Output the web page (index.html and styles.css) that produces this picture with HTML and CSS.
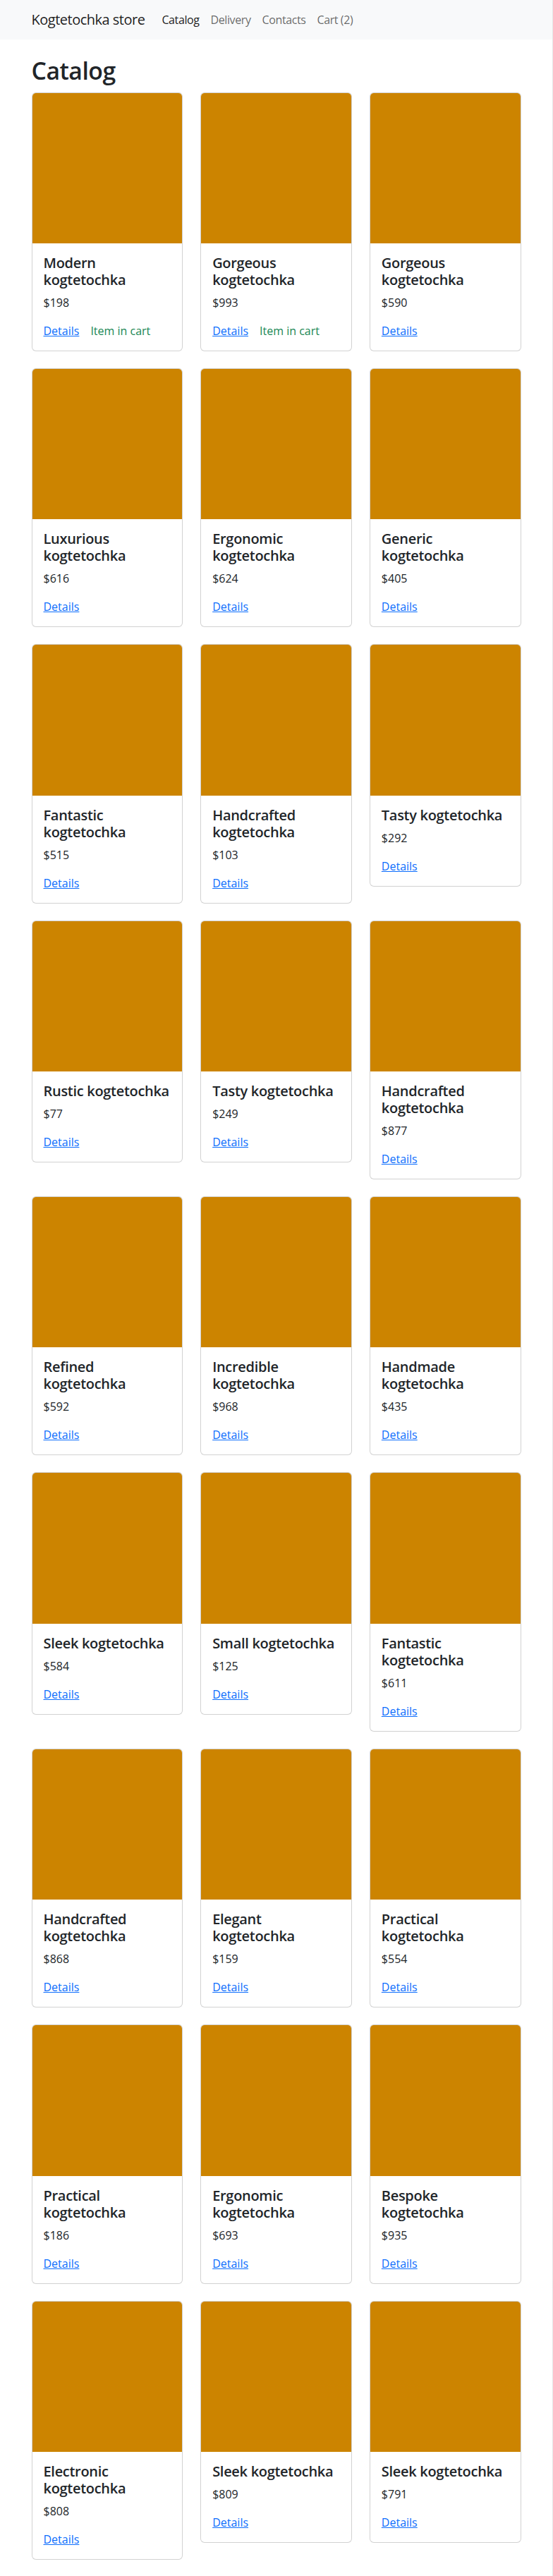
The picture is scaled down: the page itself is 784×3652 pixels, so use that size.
FILE: index.html
```html
<!DOCTYPE html>
<html lang="en">
<head>
<meta charset="utf-8">
<title>Kogtetochka store</title>
<link rel="stylesheet" href="styles.css">
</head>
<body>
<nav class="navbar">
  <div class="container nav-inner">
    <a class="brand" href="#">Kogtetochka store</a>
    <ul class="nav">
      <li><a class="nav-link active" href="#">Catalog</a></li>
      <li><a class="nav-link" href="#">Delivery</a></li>
      <li><a class="nav-link" href="#">Contacts</a></li>
      <li><a class="nav-link" href="#">Cart (2)</a></li>
    </ul>
  </div>
</nav>
<main class="container page">
  <h1 class="title">Catalog</h1>
  <div class="grid">
    <div class="card"><div class="card-img"></div><div class="card-body"><h5 class="card-title">Modern kogtetochka</h5><p class="price">$198</p><div class="links"><a class="card-link" href="#">Details</a><span class="in-cart">Item in cart</span></div></div></div>
    <div class="card"><div class="card-img"></div><div class="card-body"><h5 class="card-title">Gorgeous kogtetochka</h5><p class="price">$993</p><div class="links"><a class="card-link" href="#">Details</a><span class="in-cart">Item in cart</span></div></div></div>
    <div class="card"><div class="card-img"></div><div class="card-body"><h5 class="card-title">Gorgeous kogtetochka</h5><p class="price">$590</p><div class="links"><a class="card-link" href="#">Details</a></div></div></div>

    <div class="card"><div class="card-img"></div><div class="card-body"><h5 class="card-title">Luxurious kogtetochka</h5><p class="price">$616</p><div class="links"><a class="card-link" href="#">Details</a></div></div></div>
    <div class="card"><div class="card-img"></div><div class="card-body"><h5 class="card-title">Ergonomic kogtetochka</h5><p class="price">$624</p><div class="links"><a class="card-link" href="#">Details</a></div></div></div>
    <div class="card"><div class="card-img"></div><div class="card-body"><h5 class="card-title">Generic kogtetochka</h5><p class="price">$405</p><div class="links"><a class="card-link" href="#">Details</a></div></div></div>

    <div class="card"><div class="card-img"></div><div class="card-body"><h5 class="card-title">Fantastic kogtetochka</h5><p class="price">$515</p><div class="links"><a class="card-link" href="#">Details</a></div></div></div>
    <div class="card"><div class="card-img"></div><div class="card-body"><h5 class="card-title">Handcrafted kogtetochka</h5><p class="price">$103</p><div class="links"><a class="card-link" href="#">Details</a></div></div></div>
    <div class="card"><div class="card-img"></div><div class="card-body"><h5 class="card-title">Tasty kogtetochka</h5><p class="price">$292</p><div class="links"><a class="card-link" href="#">Details</a></div></div></div>

    <div class="card"><div class="card-img"></div><div class="card-body"><h5 class="card-title">Rustic kogtetochka</h5><p class="price">$77</p><div class="links"><a class="card-link" href="#">Details</a></div></div></div>
    <div class="card"><div class="card-img"></div><div class="card-body"><h5 class="card-title">Tasty kogtetochka</h5><p class="price">$249</p><div class="links"><a class="card-link" href="#">Details</a></div></div></div>
    <div class="card"><div class="card-img"></div><div class="card-body"><h5 class="card-title">Handcrafted kogtetochka</h5><p class="price">$877</p><div class="links"><a class="card-link" href="#">Details</a></div></div></div>

    <div class="card"><div class="card-img"></div><div class="card-body"><h5 class="card-title">Refined kogtetochka</h5><p class="price">$592</p><div class="links"><a class="card-link" href="#">Details</a></div></div></div>
    <div class="card"><div class="card-img"></div><div class="card-body"><h5 class="card-title">Incredible kogtetochka</h5><p class="price">$968</p><div class="links"><a class="card-link" href="#">Details</a></div></div></div>
    <div class="card"><div class="card-img"></div><div class="card-body"><h5 class="card-title">Handmade kogtetochka</h5><p class="price">$435</p><div class="links"><a class="card-link" href="#">Details</a></div></div></div>

    <div class="card"><div class="card-img"></div><div class="card-body"><h5 class="card-title">Sleek kogtetochka</h5><p class="price">$584</p><div class="links"><a class="card-link" href="#">Details</a></div></div></div>
    <div class="card"><div class="card-img"></div><div class="card-body"><h5 class="card-title">Small kogtetochka</h5><p class="price">$125</p><div class="links"><a class="card-link" href="#">Details</a></div></div></div>
    <div class="card"><div class="card-img"></div><div class="card-body"><h5 class="card-title">Fantastic kogtetochka</h5><p class="price">$611</p><div class="links"><a class="card-link" href="#">Details</a></div></div></div>

    <div class="card"><div class="card-img"></div><div class="card-body"><h5 class="card-title">Handcrafted kogtetochka</h5><p class="price">$868</p><div class="links"><a class="card-link" href="#">Details</a></div></div></div>
    <div class="card"><div class="card-img"></div><div class="card-body"><h5 class="card-title">Elegant kogtetochka</h5><p class="price">$159</p><div class="links"><a class="card-link" href="#">Details</a></div></div></div>
    <div class="card"><div class="card-img"></div><div class="card-body"><h5 class="card-title">Practical kogtetochka</h5><p class="price">$554</p><div class="links"><a class="card-link" href="#">Details</a></div></div></div>

    <div class="card"><div class="card-img"></div><div class="card-body"><h5 class="card-title">Practical kogtetochka</h5><p class="price">$186</p><div class="links"><a class="card-link" href="#">Details</a></div></div></div>
    <div class="card"><div class="card-img"></div><div class="card-body"><h5 class="card-title">Ergonomic kogtetochka</h5><p class="price">$693</p><div class="links"><a class="card-link" href="#">Details</a></div></div></div>
    <div class="card"><div class="card-img"></div><div class="card-body"><h5 class="card-title">Bespoke kogtetochka</h5><p class="price">$935</p><div class="links"><a class="card-link" href="#">Details</a></div></div></div>

    <div class="card"><div class="card-img"></div><div class="card-body"><h5 class="card-title">Electronic kogtetochka</h5><p class="price">$808</p><div class="links"><a class="card-link" href="#">Details</a></div></div></div>
    <div class="card"><div class="card-img"></div><div class="card-body"><h5 class="card-title">Sleek kogtetochka</h5><p class="price">$809</p><div class="links"><a class="card-link" href="#">Details</a></div></div></div>
    <div class="card"><div class="card-img"></div><div class="card-body"><h5 class="card-title">Sleek kogtetochka</h5><p class="price">$791</p><div class="links"><a class="card-link" href="#">Details</a></div></div></div>
  </div>
</main>
</body>
</html>
```

FILE: styles.css
```css
html {
  border-right: 1px solid #e6e6e6;
}
body {
  margin: 0;
  font-family: "Open Sans", "Noto Sans", sans-serif;
  font-size: 16px;
  line-height: 1.5;
  color: #212529;
  background: #fff;
}
.container {
  width: 694px;
  margin: 0 auto;
}
.navbar {
  background: #f8f9fa;
  padding: 8px 0;
}
.nav-inner {
  display: flex;
  align-items: center;
}
.brand {
  font-size: 20px;
  line-height: 30px;
  padding: 5px 0;
  margin-right: 16px;
  color: rgba(0, 0, 0, 0.9);
  text-decoration: none;
  letter-spacing: -0.5px;
}
.nav {
  display: flex;
  list-style: none;
  margin: 0;
  padding: 0;
}
.nav-link {
  display: block;
  padding: 8px 8px;
  line-height: 24px;
  color: rgba(0, 0, 0, 0.6);
  text-decoration: none;
  letter-spacing: -0.4px;
}
.nav-link.active {
  color: rgba(0, 0, 0, 0.9);
}
.page {
  padding-bottom: 24px;
}
.title {
  font-size: 33.75px;
  font-weight: 600;
  line-height: 1.2;
  margin: 24px 0 10px;
  letter-spacing: -0.5px;
}
.grid {
  display: grid;
  grid-template-columns: repeat(3, 1fr);
  column-gap: 25px;
  row-gap: 24px;
  align-items: start;
}
.card {
  border: 1px solid rgba(0, 0, 0, 0.175);
  border-radius: 6px;
  background: #fff;
  overflow: hidden;
}
.card-img {
  height: 213.4px;
  background: #cc8400;
}
.card-body {
  padding: 16px;
}
.card-title {
  font-size: 20px;
  font-weight: 600;
  line-height: 1.2;
  margin: 0 0 8px;
  letter-spacing: -0.3px;
}
.price {
  margin: 0 0 16px;
}
.links {
  display: flex;
  gap: 16px;
}
.card-link {
  color: #0d6efd;
  text-decoration: underline;
}
.in-cart {
  color: #198754;
}
```
